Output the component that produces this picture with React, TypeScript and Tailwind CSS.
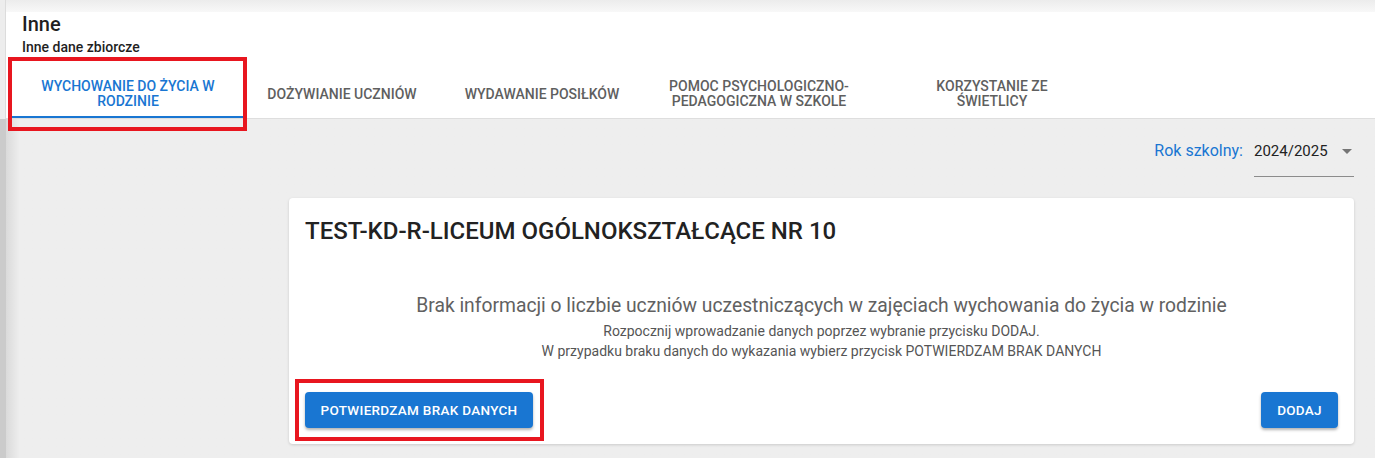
const tabs = [
  { label: ["WYCHOWANIE DO ŻYCIA W", "RODZINIE"], w: "w-[232px]", active: true },
  { label: ["DOŻYWIANIE UCZNIÓW"], w: "w-[196px]" },
  { label: ["WYDAWANIE POSIŁKÓW"], w: "w-[204px]" },
  { label: ["POMOC PSYCHOLOGICZNO-", "PEDAGOGICZNA W SZKOLE"], w: "w-[230px]" },
  { label: ["KORZYSTANIE ZE", "ŚWIETLICY"], w: "w-[236px]" },
]

export default function App() {
  return (
    <div className="relative flex h-[458px] w-[1375px] overflow-hidden bg-[#eeeeee] font-['Roboto',_'Noto_Sans',_sans-serif]">
      {/* left strip */}
      <div className="flex w-[6px] flex-col">
        <div className="h-[119px] border-r border-[#dcdcdc] bg-[#ededed]" />
        <div className="flex-1 bg-[#cbcbcb]" />
      </div>

      <div className="flex flex-1 flex-col">
        {/* header */}
        <div className="flex h-[119px] flex-col border-b border-[#dedede] bg-white">
          <div className="h-[12px] bg-gradient-to-b from-[#ececec] to-[#f8f8f8]" />
          <div className="pl-[16px] pt-[1px] text-[20px] leading-[22px] font-medium text-[#1f1f1f]">Inne</div>
          <div className="pl-[16px] pt-[4px] text-[14px] leading-[16px] font-medium text-[#1f1f1f]">Inne dane zbiorcze</div>
          <div className="mt-auto flex pl-[6px]">
            {tabs.map((t, i) => (
              <div
                key={i}
                className={`flex h-[50px] ${t.w} flex-col items-center justify-center border-b-2 pt-[4px] text-center text-[14px] leading-[15px] font-medium ${
                  t.active ? "border-[#1976d2] text-[#1976d2]" : "border-transparent text-[#5f5f5f]"
                }`}
              >
                {t.label.map((l) => (
                  <span key={l}>{l}</span>
                ))}
              </div>
            ))}
          </div>
        </div>

        {/* content */}
        <div className="flex flex-1 flex-col bg-gradient-to-r from-[#dadada] from-0% via-[#eeeeee] via-[1%] to-[#eeeeee] pr-[21px]">
          <div className="flex justify-end pt-[20px]">
            <span className="mt-[2px] text-[16px] leading-[20px] text-[#1976d2]">Rok szkolny:</span>
            <div className="ml-[11px] flex h-[38px] w-[100px] items-start justify-between border-b border-[#8c8c8c]">
              <span className="mt-[2px] text-[15px] leading-[20px] text-[#222]">2024/2025</span>
              <svg width="10" height="5" viewBox="0 0 10 5" className="mt-[10px] mr-[2px]">
                <path d="M0 0 L5 5 L10 0 Z" fill="#757575" />
              </svg>
            </div>
          </div>

          <div className="ml-[283px] mt-[21px] flex h-[246px] flex-col rounded-[4px] bg-white px-[16px] pb-[16px] shadow-[0_1px_3px_rgba(0,0,0,0.15)]">
            <h2 className="pt-[19px] text-[24px] leading-[28px] font-medium text-[#222]">
              TEST-KD-R-LICEUM OGÓLNOKSZTAŁCĄCE NR 10
            </h2>
            <div className="mt-[49px] flex flex-col items-center text-center">
              <p className="text-[19.3px] leading-[24px] text-[#616161]">
                Brak informacji o liczbie uczniów uczestniczących w zajęciach wychowania do życia w rodzinie
              </p>
              <p className="mt-[3px] text-[14px] leading-[20px] text-[#555]">
                Rozpocznij wprowadzanie danych poprzez wybranie przycisku DODAJ.
                <br />
                W przypadku braku danych do wykazania wybierz przycisk POTWIERDZAM BRAK DANYCH
              </p>
            </div>
            <div className="mt-auto flex items-center justify-between">
              <button className="h-[36px] w-[228px] rounded-[4px] bg-[#1976d2] text-[13.5px] font-medium tracking-[0.3px] text-white shadow-[0_2px_3px_rgba(0,0,0,0.3)]">
                POTWIERDZAM BRAK DANYCH
              </button>
              <button className="h-[36px] w-[77px] rounded-[4px] bg-[#1976d2] text-[13.5px] font-medium tracking-[0.3px] text-white shadow-[0_2px_3px_rgba(0,0,0,0.3)]">
                DODAJ
              </button>
            </div>
          </div>
        </div>
      </div>

      {/* annotation boxes */}
      <div className="pointer-events-none absolute left-[8px] top-[57px] h-[74px] w-[239px] border-[4px] border-[#e8161f]" />
      <div className="pointer-events-none absolute left-[295px] top-[379px] h-[62px] w-[249px] border-[4px] border-[#e8161f]" />
    </div>
  )
}
